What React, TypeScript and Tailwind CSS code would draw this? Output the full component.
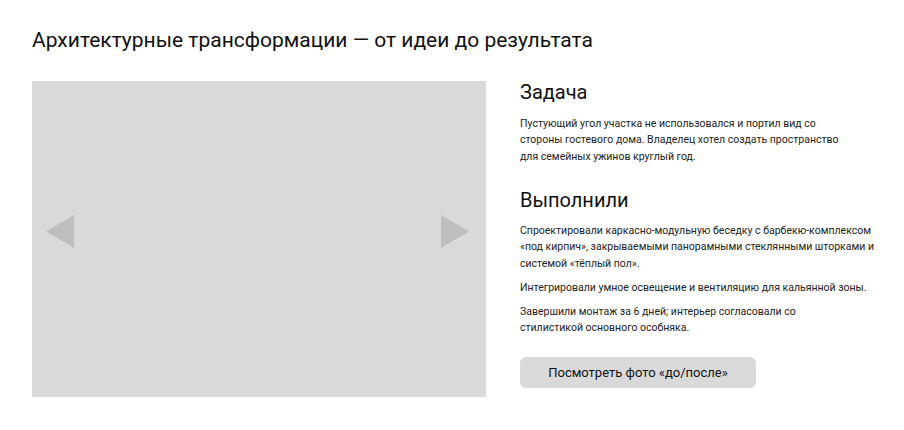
export default function App() {
  return (
    <div className="w-[904px] h-[430px] bg-white text-[#111] overflow-hidden" style={{ fontFamily: 'Roboto, "Noto Sans", sans-serif' }}>
      <div className="px-8 pt-[25px]">
        <h1 className="text-[21px] leading-[30px] font-normal whitespace-nowrap">
          Архитектурные трансформации — от идеи до результата
        </h1>
        <div className="mt-[26px] flex gap-[34px]">
          <div className="w-[454px] h-[316px] bg-[#d9d9d9] shrink-0 flex items-start justify-between pt-[134px] pl-[14px] pr-[17px]">
            <svg width="28" height="33" viewBox="0 0 28 33">
              <polygon points="0,16.5 28,0 28,33" fill="#bebebe" />
            </svg>
            <svg width="28" height="33" viewBox="0 0 28 33">
              <polygon points="28,16.5 0,0 0,33" fill="#bebebe" />
            </svg>
          </div>
          <div className="flex flex-col whitespace-nowrap">
            <h2 className="text-[20px] leading-[22px] font-normal">Задача</h2>
            <p className="mt-[12.5px] text-[10.5px] leading-[16.5px] text-[#222]">
              Пустующий угол участка не использовался и портил вид со
              <br />
              стороны гостевого дома. Владелец хотел создать пространство
              <br />
              для семейных ужинов круглый год.
            </p>
            <h2 className="mt-[24px] text-[20px] leading-[22px] font-normal">Выполнили</h2>
            <p className="mt-[11.5px] text-[10.5px] leading-[16.5px] text-[#222]">
              Спроектировали каркасно-модульную беседку с барбекю-комплексом
              <br />
              «под кирпич», закрываемыми панорамными стеклянными шторками и
              <br />
              системой «тёплый пол».
            </p>
            <p className="mt-[7.5px] text-[10.5px] leading-[16.5px] text-[#222]">
              Интегрировали умное освещение и вентиляцию для кальянной зоны.
            </p>
            <p className="mt-[7.5px] text-[10.5px] leading-[16px] text-[#222]">
              Завершили монтаж за 6 дней; интерьер согласовали со
              <br />
              стилистикой основного особняка.
            </p>
            <button className="mt-[21.5px] w-[236px] h-[31px] rounded-[6px] bg-[#d9d9d9] text-[13px] text-[#111]">
              Посмотреть фото «до/после»
            </button>
          </div>
        </div>
      </div>
    </div>
  );
}
